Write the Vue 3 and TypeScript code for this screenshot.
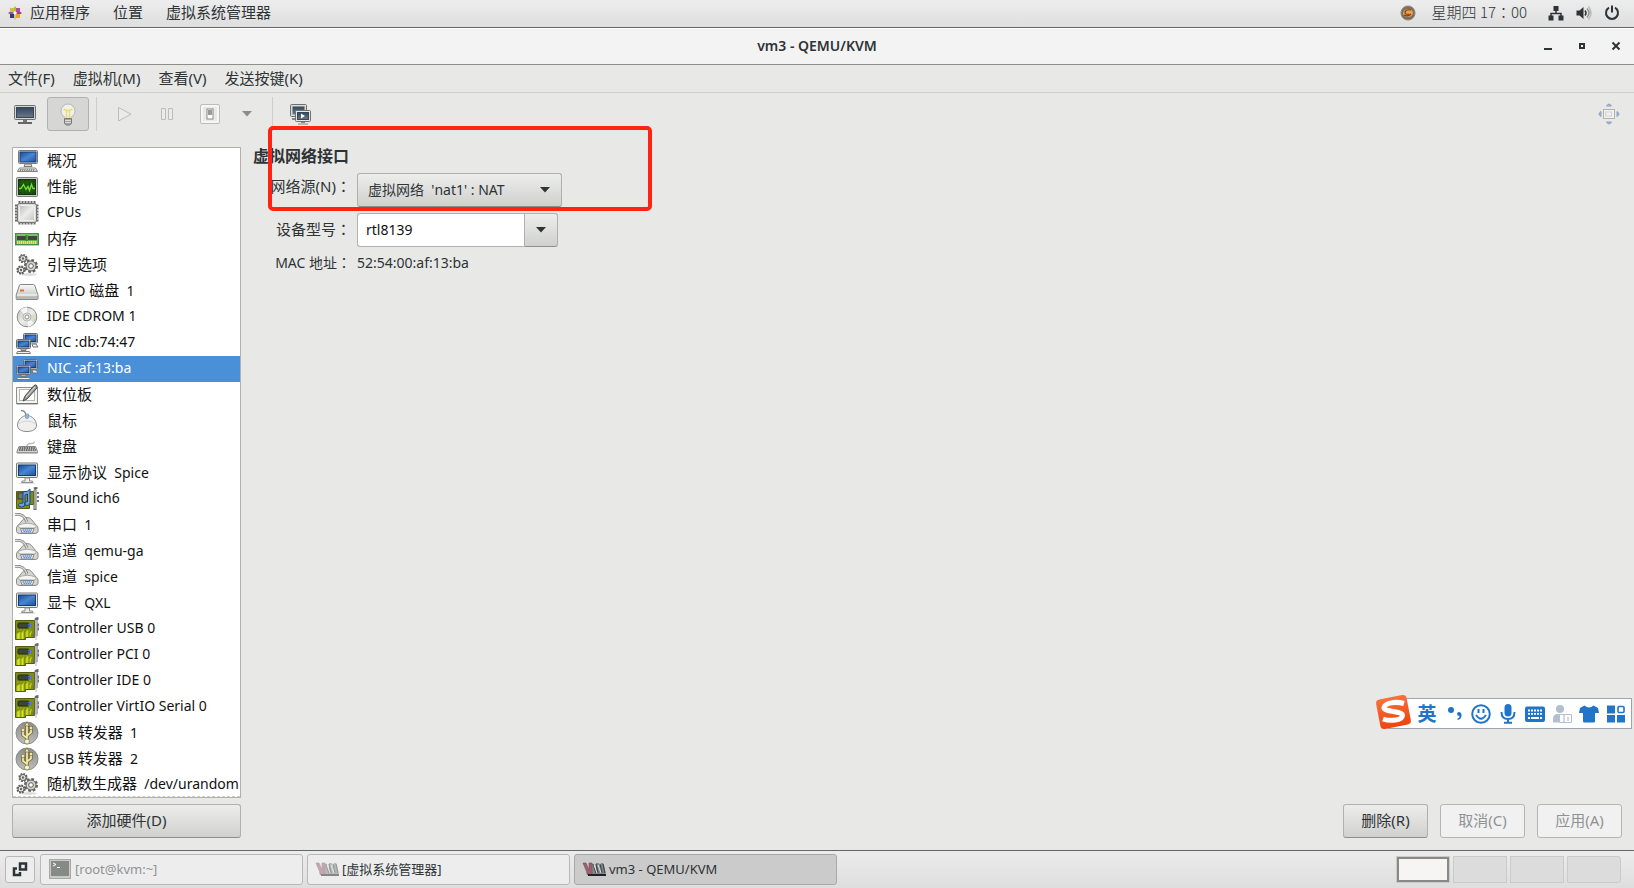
<script setup lang="ts">
import { ref } from 'vue'

interface Device {
  icon: string
  label: string
}

const devices: Device[] = [
  { icon: 'computer', label: '概况' },
  { icon: 'perf', label: '性能' },
  { icon: 'cpu', label: 'CPUs' },
  { icon: 'ram', label: '内存' },
  { icon: 'gears', label: '引导选项' },
  { icon: 'disk', label: 'VirtIO 磁盘  1' },
  { icon: 'cdrom', label: 'IDE CDROM 1' },
  { icon: 'nic', label: 'NIC :db:74:47' },
  { icon: 'nic', label: 'NIC :af:13:ba' },
  { icon: 'tablet', label: '数位板' },
  { icon: 'mouse', label: '鼠标' },
  { icon: 'keyboard', label: '键盘' },
  { icon: 'display', label: '显示协议  Spice' },
  { icon: 'sound', label: 'Sound ich6' },
  { icon: 'serial', label: '串口  1' },
  { icon: 'serial', label: '信道  qemu-ga' },
  { icon: 'serial', label: '信道  spice' },
  { icon: 'display', label: '显卡  QXL' },
  { icon: 'card', label: 'Controller USB 0' },
  { icon: 'card', label: 'Controller PCI 0' },
  { icon: 'card', label: 'Controller IDE 0' },
  { icon: 'card', label: 'Controller VirtIO Serial 0' },
  { icon: 'usb', label: 'USB 转发器  1' },
  { icon: 'usb', label: 'USB 转发器  2' },
  { icon: 'gears', label: '随机数生成器  /dev/urandom' },
]

// Splits a label so that Han runs can be set one size larger than Latin ones.
const runs = (text: string) => text.split(/([\u4e00-\u9fff]+)/).filter(Boolean)
const isHan = (text: string) => /[\u4e00-\u9fff]/.test(text)

const selected = ref(8)
const model = ref('rtl8139')
const menus = ['文件(F)', '虚拟机(M)', '查看(V)', '发送按键(K)']
</script>

<template>
  <div class="desktop">
    <svg class="defs" width="0" height="0" aria-hidden="true">
      <defs>
        <linearGradient id="scr" x1="0" y1="0" x2="1" y2="1">
          <stop offset="0" stop-color="#16499c" /><stop offset=".5" stop-color="#4a86cf" /><stop offset="1" stop-color="#1c4f9f" />
        </linearGradient>
        <linearGradient id="dark" x1="0" y1="0" x2="0" y2="1">
          <stop offset="0" stop-color="#33475f" /><stop offset="1" stop-color="#66788c" />
        </linearGradient>
        <linearGradient id="silver" x1="0" y1="0" x2="0" y2="1">
          <stop offset="0" stop-color="#fafafa" /><stop offset="1" stop-color="#b9bbb8" />
        </linearGradient>
        <linearGradient id="chip" x1="0" y1="0" x2="1" y2="1">
          <stop offset="0" stop-color="#bcbcba" /><stop offset=".5" stop-color="#ececea" /><stop offset="1" stop-color="#c4c4c2" />
        </linearGradient>
        <linearGradient id="usbg" x1="0" y1="0" x2="0" y2="1">
          <stop offset="0" stop-color="#8c8c8a" /><stop offset="1" stop-color="#bdbdbb" />
        </linearGradient>
        <linearGradient id="sogou" x1="0" y1="0" x2="0" y2="1">
          <stop offset="0" stop-color="#f9713a" /><stop offset="1" stop-color="#f0440f" />
        </linearGradient>
        <symbol id="i-computer" viewBox="0 0 24 24">
          <rect x="3.5" y="1.5" width="19" height="13" rx="1" fill="#e4e4e0" stroke="#777974" />
          <rect x="5" y="3" width="16" height="10" fill="url(#scr)" stroke="#163c77" />
          <path d="M10 15h6l1 2.500h-8z" fill="#ddd" stroke="#777974" />
          <path d="M4.500 19h16l2 3.500h-20z" fill="#f3f3f1" stroke="#80827e" />
          <path d="M5 20.500h15M4.500 21.500h16" stroke="#8a8c88" stroke-dasharray="1.500 .7" fill="none" />
        </symbol>
        <symbol id="i-perf" viewBox="0 0 24 24">
          <rect x="1.500" y="2.500" width="21" height="19" rx="1" fill="#c9cac7" stroke="#7b7d79" />
          <rect x="3.500" y="4.500" width="17" height="15" fill="#14500a" stroke="#1d2f17" />
          <path d="M4 8h16M4 12h16M4 16h16M8 5v14M12 5v14M16 5v14" stroke="#276c19" stroke-width=".6" />
          <path d="M4 13.500h2l2.500-4 2.500 5 2-3 1.500 4 2-6 1.500 4h2" fill="none" stroke="#7be234" stroke-width="1.300" />
        </symbol>
        <symbol id="i-cpu" viewBox="0 0 24 24">
          <path d="M3.500 1.500h18M3.500 22h18" stroke="#6c6d6a" stroke-width="3" stroke-dasharray="2 1" />
          <path d="M1.500 3.500v18M22 3.500v18" stroke="#6c6d6a" stroke-width="3" stroke-dasharray="2 1" />
          <rect x="2.500" y="2.500" width="19" height="19" rx="2" fill="#d9d9d7" stroke="#777875" />
          <rect x="4.500" y="4.500" width="15" height="15" rx="1" fill="url(#chip)" stroke="#f2f2f0" />
        </symbol>
        <symbol id="i-ram" viewBox="0 0 24 24">
          <rect x="0.500" y="6.500" width="23" height="11" fill="#67ad55" stroke="#4d8851" />
          <rect x="2" y="9" width="9" height="4" fill="#414641" /><rect x="13" y="9" width="9" height="4" fill="#414641" />
          <path d="M2 8h20" stroke="#9bcf8b" /><path d="M11.500 8v7" stroke="#1f9b22" stroke-width="2" />
          <path d="M2 15.500h20" stroke="#f5dd65" stroke-width="3" stroke-dasharray="1.500 .5" />
          <path d="M0 18.500h24" stroke="#c8c9b8" />
        </symbol>
        <symbol id="i-gears" viewBox="0 0 24 24">
          <ellipse cx="14" cy="21.500" rx="8" ry="1.500" fill="#ddd" />
          <g fill="#e8e8e5" stroke="#5f615d">
            <circle cx="8" cy="5.500" r="3.600" stroke-dasharray="1.800 1" stroke-width="2" /><circle cx="8" cy="5.500" r="3" />
            <circle cx="6" cy="17" r="3.600" stroke-dasharray="1.800 1" stroke-width="2" /><circle cx="6" cy="17" r="3" />
            <circle cx="16" cy="13" r="5.800" stroke-dasharray="2.600 1.900" stroke-width="2.500" /><circle cx="16" cy="13" r="5" fill="#d2d2cf" />
            <circle cx="16" cy="13" r="2.300" fill="#fff" />
          </g>
          <circle cx="8" cy="5.500" r="1.200" fill="#666" /><circle cx="6" cy="17" r="1.200" fill="#666" />
        </symbol>
        <symbol id="i-disk" viewBox="0 0 24 24">
          <path d="M5.500 5.500h13q1 0 1.500 1.500l3 9v3.500q0 1-1 1h-20q-.800 0-.800-1v-3.500l3-9q.300-1.500 1.300-1.500z" fill="url(#silver)" stroke="#858784" />
          <path d="M2 16h20.500" stroke="#fff" /><path d="M2 18.500h20" stroke="#b6b7b4" stroke-width="2" />
          <rect x="5" y="10.500" width="4" height="2" fill="#e8702a" />
        </symbol>
        <symbol id="i-cdrom" viewBox="0 0 24 24">
          <circle cx="12" cy="12" r="9.800" fill="url(#chip)" stroke="#888a87" />
          <path d="M12 12L5 5q3-3 7-3zM12 12l7 6q-2 3-6 4z" fill="#fff" opacity=".75" />
          <path d="M12 12l8-3q1 3 0 6z" fill="#d9dcb9" opacity=".7" />
          <circle cx="12" cy="12" r="4" fill="#e8e8e6" stroke="#b4b4b2" /><circle cx="12" cy="12" r="2" fill="#fff" stroke="#8c8e8b" />
        </symbol>
        <symbol id="i-nic" viewBox="0 0 24 24">
          <rect x="8.500" y="2.500" width="14" height="9.500" rx="1" fill="#eee" stroke="#6b6d69" />
          <rect x="10" y="4" width="11" height="6.500" fill="url(#scr)" stroke="#163c77" />
          <path d="M17 13h4l2 3h-5z" fill="#eee" stroke="#777" />
          <rect x="1.500" y="8.500" width="14" height="9" rx="1" fill="#eee" stroke="#6b6d69" />
          <rect x="3" y="10" width="11" height="6" fill="url(#scr)" stroke="#163c77" />
          <path d="M6 18h5v1.500H6zM2.500 20.500h12l1 2h-14z" fill="#f2f2ee" stroke="#777974" />
        </symbol>
        <symbol id="i-tablet" viewBox="0 0 24 24">
          <path d="M1.500 4.500h21v16.500h-21z" fill="#f5f5f4" stroke="#8d8f8b" />
          <rect x="4.500" y="6.500" width="15" height="11" fill="#fff" stroke="#b5b6b3" />
          <path d="M2 20.500h20.500" stroke="#777" />
          <path d="M8 18l2-5L19 2.500q2-1.500 3 .5v2L12 16z" fill="#999b98" stroke="#4c4e4b" />
          <path d="M11 14L20 4" stroke="#ddd" />
        </symbol>
        <symbol id="i-mouse" viewBox="0 0 24 24">
          <path d="M6 1.500q5 0 5 6" fill="none" stroke="#858785" stroke-width="1.300" />
          <path d="M12 6.500c5 0 9.500 5 9.500 9.500s-4 6.500-9.500 6.500-9.500-2-9.500-6.500S7 6.500 12 6.500z" fill="#efefed" stroke="#8b8d8a" />
          <path d="M3 15q9-6 18 0" fill="none" stroke="#d2d3d0" /><path d="M10.500 5h3v4q-1.500 1-3 0z" fill="#8fb9ea" stroke="#6b8cb5" stroke-width=".6" />
        </symbol>
        <symbol id="i-keyboard" viewBox="0 0 24 24">
          <path d="M19 6.500q1 2-3 2t-4 3" fill="none" stroke="#b9bab8" stroke-width="1.300" />
          <path d="M4 11.500h16.500l2 5v1.500h-20.500v-1.500z" fill="#d1d2cf" stroke="#858784" />
          <path d="M4.500 13h16M4 15h17" stroke="#4d4f4c" stroke-width="1.400" stroke-dasharray="1.600 .7" /><path d="M2 17.500h20.500" stroke="#999" />
        </symbol>
        <symbol id="i-display" viewBox="0 0 24 24">
          <rect x="1.500" y="2" width="21" height="14.500" rx="1" fill="#e9e9e4" stroke="#777974" />
          <rect x="3.500" y="4" width="17" height="10.500" fill="url(#scr)" stroke="#163c77" />
          <path d="M10 17h4.500v3h3l.5 1.500H6.500L7 20h3z" fill="#eee" stroke="#8d8f8b" /><path d="M4 22.500h16" stroke="#ddd" />
        </symbol>
        <symbol id="i-card" viewBox="0 0 24 24">
          <path d="M.5 3.500h19v17h-9v2H.5z" fill="#7f8d0e" stroke="#545e0b" />
          <path d="M2 13h12M15 7v11" stroke="#a5b41b" stroke-dasharray="2 1" />
          <rect x="3" y="6" width="11" height="5" rx="1" fill="#3d443e" stroke="#202a22" /><path d="M13 7.500h4M13 10h4" stroke="#4b79c4" stroke-width="1.600" />
          <path d="M2 22v-5l3-2v7M6.500 22v-6l2-2v8M11 20v-5l2-2v7M15 20v-4l2-2" fill="#d7e52c" stroke="#b3c218" />
          <path d="M18 19l3-1V2.500q0-1 2.500-1" fill="none" stroke="#686a67" stroke-width="3" />
          <path d="M21 23V3" stroke="#d0d1cf" stroke-width="1.500" /><path d="M22.500 8h1.500M22.500 12h1.500" stroke="#777" stroke-width="3" />
        </symbol>
        <symbol id="i-sound" viewBox="0 0 24 24">
          <path d="M1.500 4.500h17v13h-4v4h-13z" fill="#7f8d0e" stroke="#545e0b" />
          <rect x="3" y="6" width="6" height="6" fill="#6c766f" stroke="#353b35" />
          <path d="M19 2q2-1 3 0M20 3v20" stroke="#686a67" stroke-width="3" fill="none" /><path d="M20 3v19" stroke="#ddd" />
          <path d="M22 6h2M22 10h2M22 14h2" stroke="#777" stroke-width="2" />
          <path d="M8 16V5q5 0 7-3v14q0 2.500-3 2.500t-2.500-2.500q.5-1.500 3-1.500V7l-2.500 1v9q0 3-3.500 3t-3-2.500Q4 16 8 16z" fill="#6f9fdb" stroke="#1d4687" />
        </symbol>
        <symbol id="i-serial" viewBox="0 0 24 24">
          <path d="M1.500 15q0-2 2-3L8 6.500Q9.500 4.500 12 4.500q3 0 4.500 2L21 12q2 1 2 3v3.500q-.5 2-3 2H4.500q-2.500 0-3-2z" fill="#d5d6d3" stroke="#8a8c88" />
          <path d="M3 12.500Q12 8 21.500 12.500L20 15H4.500z" fill="#f4f4f2" stroke="#a9aba7" />
          <path d="M0 1.500q7-1 10 3.500l2 4" fill="none" stroke="#858784" stroke-width="3" />
          <path d="M0 1.500q7-1 10 3.500l2 4" fill="none" stroke="#dcddda" stroke-width="1.300" />
          <path d="M5.500 15.500h13.500l-1.500 4.500H7z" fill="#e8ecf2" stroke="#858784" /><path d="M7.500 17h10M8.500 18.700h8" stroke="#5e92db" stroke-width="1.300" stroke-dasharray="1.500 .5" />
        </symbol>
        <symbol id="i-usb" viewBox="0 0 24 24">
          <circle cx="12" cy="12" r="11" fill="url(#usbg)" stroke="#8c8e8a" />
          <path d="M12 3v17M12 17l-4-3V9M12 14.500l4-3V7" fill="none" stroke="#6c6743" stroke-width="3.400" />
          <path d="M12 3v17M12 17l-4-3V9M12 14.500l4-3V7" fill="none" stroke="#f4e8a2" stroke-width="1.800" />
          <path d="M12 1l2.500 4h-5z" fill="#f4e8a2" stroke="#6c6743" stroke-width=".7" /><circle cx="12" cy="20.500" r="2.500" fill="#f9f2c8" stroke="#7e794f" stroke-width=".7" />
          <circle cx="8" cy="9" r="1.800" fill="#f4e8a2" stroke="#6c6743" stroke-width=".6" /><rect x="14.500" y="5.500" width="3.200" height="3.200" fill="#f4e8a2" stroke="#6c6743" stroke-width=".6" />
        </symbol>
        <symbol id="i-vmm" viewBox="0 0 24 16">
          <path d="M5 14L4 11.500h4L7 2h3l4 9V2h3l2 9V2h2l3 12z" fill="#83888a" />
          <path d="M1 2h3l3 7V2h3v12H6z" fill="#a06070" stroke="#6b5059" stroke-width=".6" />
          <path d="M11 3l3 9M14 3l2 9M18 3l2 9M21 3l2 9" stroke="#3f4749" stroke-width="1.200" /><path d="M6 14h18" stroke="#222" stroke-width="2" />
          <path d="M12 4l3 8M16 4l3 8" stroke="#dde2e3" />
        </symbol>
      </defs>
    </svg>

    <header class="panel">
      <nav class="panel-left">
        <svg width="14" height="14" viewBox="0 0 14 14" aria-hidden="true">
          <path d="M7 0l2 3-2 3-2-3z" fill="#9acb2d" /><path d="M14 7l-3 2-3-2 3-2z" fill="#a33c8c" /><path d="M7 14l-2-3 2-3 2 3z" fill="#c5d35b" /><path d="M0 7l3-2 3 2-3 2z" fill="#8b5aa8" />
          <path d="M2 2h4v4H2z" fill="#d9b74a" /><path d="M8 2h4v4H8z" fill="#b44aa0" /><path d="M8 8h4v4H8z" fill="#efa52c" /><path d="M2 8h4v4H2z" fill="#3c3485" /><path d="M6 6h2v2H6z" fill="#fff" />
        </svg>
        <button type="button" class="plain apps">应用程序</button>
        <button type="button" class="plain">位置</button>
        <button type="button" class="plain">虚拟系统管理器</button>
      </nav>
      <div class="panel-right">
        <svg width="16" height="16" viewBox="0 0 16 16" aria-hidden="true">
          <circle cx="8" cy="8" r="7" fill="#7d6e60" stroke="#88827b" /><path d="M3 9q0-5 6-5 4 1 4 4-1 4-5 4-4 0-5-3z" fill="#f0a04b" />
          <path d="M11 5q-5-1-6 2 0 3 4 2M4 10q4 2 7-1" fill="none" stroke="#7d4412" stroke-width="1.200" />
        </svg>
        <button type="button" class="plain clock">星期四 17：00</button>
        <svg width="16" height="16" viewBox="0 0 16 16" aria-label="网络">
          <path d="M8 4v5M3 11V8.500h10V11" fill="none" stroke="#2e3436" stroke-width="1.500" /><path d="M5.500 1h5v5h-5zM.5 10.500h5v5h-5zM10.500 10.500h5v5h-5z" fill="#2e3436" />
        </svg>
        <svg width="16" height="16" viewBox="0 0 16 16" aria-label="音量">
          <path d="M.5 5.500h3L7.500 2v12l-4-3.500h-3z" fill="#2e3436" /><path d="M9 5.500q2 2.500 0 5" fill="none" stroke="#2e3436" stroke-width="1.500" />
          <path d="M11 3.500q4 4.500 0 9" fill="none" stroke="#8f9394" stroke-width="1.500" /><path d="M12.500 1.500q5 6.500 0 13" fill="none" stroke="#b9bbbb" stroke-width="1.500" />
        </svg>
        <svg width="16" height="16" viewBox="0 0 16 16" aria-label="电源">
          <path d="M5 2.700a6 6 0 1 0 6 0" fill="none" stroke="#2e3436" stroke-width="2" /><path d="M8 .5v7" stroke="#2e3436" stroke-width="2" />
        </svg>
      </div>
    </header>

    <div class="titlebar">
      <span></span>
      <h1>vm3 - QEMU/KVM</h1>
      <div class="wm">
        <button type="button" class="plain" aria-label="最小化"><svg width="10" height="10"><path d="M1 8h8" stroke="#2e3436" stroke-width="2" /></svg></button>
        <button type="button" class="plain" aria-label="最大化"><svg width="10" height="10"><path d="M3 3h4v4H3z" fill="none" stroke="#2e3436" stroke-width="2" /></svg></button>
        <button type="button" class="plain" aria-label="关闭"><svg width="10" height="10"><path d="M1.500 1.500l7 7M8.500 1.500l-7 7" stroke="#2e3436" stroke-width="2" /></svg></button>
      </div>
    </div>

    <nav class="menubar">
      <button v-for="m in menus" :key="m" type="button" class="plain">{{ m }}</button>
    </nav>

    <div class="toolbar">
      <button type="button" class="plain tool" aria-label="控制台">
        <svg width="24" height="24" viewBox="0 0 24 24">
          <rect x="1.500" y="3.500" width="21" height="14" rx="1" fill="#d5d6d3" stroke="#6f716d" /><rect x="3.500" y="5.500" width="17" height="10" fill="url(#dark)" stroke="#3a4554" />
          <path d="M10 18h4v2.500h-4z" fill="#777" /><path d="M5 21h14" stroke="#666" stroke-width="2" />
        </svg>
      </button>
      <button type="button" class="tool active" aria-label="详情">
        <svg width="24" height="24" viewBox="0 0 24 24">
          <circle cx="12" cy="9" r="7" fill="#f1f1e9" stroke="#b6b7b0" /><path d="M9 13h6v5H9z" fill="#eeeede" />
          <path d="M7.500 7l3 1.500h3l3-1.500M10.500 8v8M13.500 8v8" fill="none" stroke="#e9dc76" stroke-width="1.400" />
          <path d="M8.500 16.500h7v5l-2 1.500h-3l-2-1.500z" fill="#a2a49f" stroke="#777974" /><path d="M9 18.500h6M9 20.500h6" stroke="#dcdcda" />
        </svg>
      </button>
      <i class="sep"></i>
      <button type="button" class="plain tool" disabled aria-label="运行">
        <svg width="24" height="24" viewBox="0 0 24 24"><path d="M6.500 5.500v13.500L19 12.200z" fill="#ebebea" stroke="#bcbdbb" /></svg>
      </button>
      <button type="button" class="plain tool" disabled aria-label="暂停">
        <svg width="24" height="24" viewBox="0 0 24 24"><path d="M6.500 6.500h4v11h-4zM13.500 6.500h4v11h-4z" fill="#ebebea" stroke="#bcbdbb" /></svg>
      </button>
      <button type="button" class="plain tool" aria-label="关机">
        <svg width="24" height="24" viewBox="0 0 24 24"><rect x="2.500" y="2.500" width="19" height="19" rx="1.500" fill="#f6f6f5" stroke="#bdbebb" /><rect x="5" y="5" width="14" height="14" fill="#e9e9e7" /><rect x="9" y="7" width="6" height="10" fill="#fff" stroke="#888a87" /><path d="M10 8h4v5h-4z" fill="#999b98" /></svg>
      </button>
      <button type="button" class="plain arrow" aria-label="关机选项"><svg width="10" height="6"><path d="M0 0h10L5 5.500z" fill="#8b8d8a" /></svg></button>
      <i class="sep"></i>
      <button type="button" class="plain tool" aria-label="快照">
        <svg width="24" height="24" viewBox="0 0 24 24">
          <rect x="2.500" y="2.500" width="16" height="12" rx="1" fill="#d9dad7" stroke="#6f716d" /><rect x="4.500" y="4.500" width="12" height="8" fill="url(#dark)" />
          <path d="M4 17h5" stroke="#888" stroke-width="2" />
          <rect x="7.500" y="8.500" width="15" height="11" rx="1" fill="#e6e6e4" stroke="#6f716d" /><rect x="9.500" y="10.500" width="11" height="7" fill="url(#dark)" stroke="#3a4554" />
          <path d="M13 11.500v5l4-2.500z" fill="#fff" /><path d="M10 22h10M13 20.500h4" stroke="#888" />
        </svg>
      </button>
      <button type="button" class="plain tool full" aria-label="全屏">
        <svg width="24" height="24" viewBox="0 0 24 24">
          <g fill="#a9b9d4" stroke="#8ea2c4"><path d="M9.500 4q2.500-4 5 0zM9.500 20q2.500 4 5 0zM4 9.500q-4 2.500 0 5zM20 9.500q4 2.500 0 5z" /></g>
          <rect x="6.500" y="7.500" width="11" height="9" fill="#f1f1f0" stroke="#b0b2ae" /><rect x="8.500" y="10" width="6" height="4" fill="none" stroke="#d3d4d2" />
        </svg>
      </button>
    </div>

    <main class="content">
      <aside class="side">
        <ul class="devices">
          <li v-for="(d, i) in devices" :key="i">
            <button type="button" class="plain device" :class="{ on: selected === i }" @click="selected = i">
              <svg width="24" height="24" aria-hidden="true"><use :href="'#i-' + d.icon" /></svg>
              <span class="name"><span v-for="(r, k) in runs(d.label)" :key="k" :class="{ han: isHan(r) }">{{ r }}</span></span>
            </button>
          </li>
        </ul>
        <button type="button" class="btn">添加硬件(D)</button>
      </aside>

      <section class="detail">
        <h2>虚拟网络接口</h2>
        <form class="form" @submit.prevent>
          <label for="source" class="high">网络源(N)：</label>
          <div class="select">
            <select id="source">
              <option>虚拟网络&nbsp; 'nat1' : NAT</option>
            </select>
            <svg width="10" height="6" aria-hidden="true"><path d="M0 0h10L5 5.500z" fill="#2e3436" /></svg>
          </div>
          <label for="model">设备型号：</label>
          <div class="combo">
            <input id="model" v-model="model" type="text" />
            <button type="button" aria-label="选择设备型号"><svg width="10" height="6"><path d="M0 0h10L5 5.500z" fill="#2e3436" /></svg></button>
          </div>
          <span class="label">MAC 地址：</span>
          <span class="mac">52:54:00:af:13:ba</span>
        </form>
        <div class="mark"></div>
        <div class="actions">
          <button type="button" class="btn">删除(R)</button>
          <button type="button" class="btn" disabled>取消(C)</button>
          <button type="button" class="btn" disabled>应用(A)</button>
        </div>
      </section>
    </main>

    <footer class="taskbar">
      <button type="button" class="task show" aria-label="显示桌面">
        <svg width="16" height="16" viewBox="0 0 16 16"><path d="M8 2.500h6v6H8z" fill="none" stroke="#2e3436" stroke-width="2.500" /><path d="M5 7.500H2V14h6v-3" fill="none" stroke="#2e3436" stroke-width="2.500" /></svg>
      </button>
      <button type="button" class="task dim">
        <svg width="24" height="24" viewBox="0 0 24 24"><rect x="1.500" y="2.500" width="21" height="19" fill="#c9cac8" stroke="#a9aaa8" /><rect x="3" y="4" width="18" height="15" fill="#858a87" /><path d="M5 6l3 1.500L5 9M9 10.500h3" fill="none" stroke="#fff" /></svg>
        <span>[root@kvm:~]</span>
      </button>
      <button type="button" class="task"><svg class="faded" width="24" height="16"><use href="#i-vmm" /></svg><span>[虚拟系统管理器]</span></button>
      <button type="button" class="task current"><svg width="24" height="16"><use href="#i-vmm" /></svg><span>vm3 - QEMU/KVM</span></button>
      <div class="spaces">
        <button type="button" class="space here" aria-label="工作区 1"></button>
        <button v-for="n in 3" :key="n" type="button" class="space" :aria-label="'工作区 ' + (n + 1)"></button>
      </div>
    </footer>

    <div class="ime">
      <svg class="logo" width="38" height="36" viewBox="0 0 38 36" aria-hidden="true">
        <rect x="3" y="3" width="31" height="30" rx="4" fill="url(#sogou)" transform="rotate(-11 18.500 18)" />
        <path d="M29 9.500C20 7 10 9 9 13.500c-.5 5 19 3 18.500 8C27 26.500 15 27.500 8 25" fill="none" stroke="#fff" stroke-width="5" />
      </svg>
      <button type="button" class="plain lang">英</button>
      <button type="button" class="plain" aria-label="标点"><svg width="20" height="20" viewBox="0 0 20 20"><circle cx="7" cy="6" r="3" fill="#2175c9" /><path d="M14.500 8q3.500 0 3 4-.5 3.500-4 4v-1.500q2-.5 2-2.500-2.500 0-2.500-2 0-1.500 1.500-2z" fill="#2175c9" /></svg></button>
      <button type="button" class="plain" aria-label="表情"><svg width="20" height="20" viewBox="0 0 20 20"><circle cx="10" cy="10" r="8.800" fill="none" stroke="#2175c9" stroke-width="2" /><path d="M5 11q5 7.500 10 0" fill="none" stroke="#2175c9" stroke-width="1.800" /><path d="M7.500 5v4M12.500 5v4" stroke="#2175c9" stroke-width="2" /></svg></button>
      <button type="button" class="plain" aria-label="语音"><svg width="20" height="20" viewBox="0 0 20 20"><rect x="6.500" y="0" width="7" height="12.500" rx="3.500" fill="#2175c9" /><path d="M3.500 8q0 7 6.500 7t6.500-7M10 15v3M6 18.800h8" fill="none" stroke="#2175c9" stroke-width="2" /></svg></button>
      <button type="button" class="plain" aria-label="软键盘"><svg width="20" height="20" viewBox="0 0 20 20"><rect x="0" y="2.500" width="20" height="15.500" rx="2" fill="#2175c9" /><path d="M3 6.500h14M3 9.800h14" stroke="#fff" stroke-width="1.800" stroke-dasharray="2 1" /><path d="M3 14h14" stroke="#fff" stroke-width="1.800" stroke-dasharray="2 1 8 1" /></svg></button>
      <button type="button" class="plain" aria-label="账户"><svg width="20" height="20" viewBox="0 0 20 20"><circle cx="8" cy="5" r="4" fill="#b3bed2" /><path d="M1 18.500v-4Q1 10 6 10h3q4 0 5 2v6.500z" fill="#b3bed2" /><path d="M7.500 10.500h12v8h-12z" fill="#fff" stroke="#b3bed2" /><path d="M12 11v7M16 13v4" stroke="#b3bed2" stroke-width="1.200" /></svg></button>
      <button type="button" class="plain" aria-label="皮肤"><svg width="20" height="20" viewBox="0 0 20 20"><path d="M5.500 1.500q4.500 4 9 0L19 4l1 5h-4v8.500q0 1-1 1H5q-1 0-1-1V9H0l1-5z" fill="#2175c9" /></svg></button>
      <button type="button" class="plain" aria-label="工具箱"><svg width="20" height="20" viewBox="0 0 20 20"><path d="M1 1.500h8v8H1zM1 11h8v7.500H1zM11 11h8v7.500h-8z" fill="#2175c9" /><rect x="12" y="2.500" width="6" height="6" rx="1" fill="#fff" stroke="#2175c9" stroke-width="1.600" /></svg></button>
    </div>
  </div>
</template>

<style>
html,
body {
  margin: 0;
  background: #e8e8e6;
}
</style>

<style scoped>
.desktop {
  position: relative;
  display: flex;
  flex-direction: column;
  min-height: 100vh;
  background: #e8e8e6;
  color: #2e3436;
  font: 14px/20px "Noto Sans", "Noto Sans CJK SC", sans-serif;
}
.desktop *,
.desktop {
  box-sizing: border-box;
}
.defs {
  position: absolute;
}
svg {
  display: block;
  flex: none;
}
button,
select,
input {
  margin: 0;
  font: inherit;
  color: inherit;
}
.plain {
  padding: 0;
  border: 0;
  background: none;
  white-space: pre;
}
.panel {
  display: flex;
  justify-content: space-between;
  height: 28px;
  padding: 0 14px 2px 8px;
  background: linear-gradient(#ededed, #dedede);
  border-bottom: 1px solid #65666a;
  font-size: 15px;
}
.panel .plain,
.menubar .plain {
  padding-bottom: 2px;
}
.panel-left,
.panel-right {
  display: flex;
  align-items: center;
}
.panel-left {
  gap: 23px;
}
.apps {
  margin-left: -15px;
}
.panel-right {
  gap: 12px;
}
.clock {
  margin: 0 9px 0 4px;
  font-family: "Noto Sans CJK TC", sans-serif;
  font-weight: 300;
}
.titlebar {
  display: grid;
  grid-template-columns: 1fr auto 1fr;
  align-items: center;
  height: 37px;
  padding: 0 13px 2px;
  background: #f3f3f3;
  border-top: 1px solid #fff;
  border-bottom: 1px solid #8d8e88;
}
h1 {
  margin: 0;
  font-size: 14px;
  font-weight: 600;
}
.wm {
  display: flex;
  justify-content: flex-end;
  gap: 24px;
}
.menubar {
  display: flex;
  align-items: center;
  gap: 18px;
  height: 28px;
  padding: 0 8px;
  border-bottom: 1px solid #cfcfcd;
  font-size: 15px;
}
.toolbar {
  display: flex;
  align-items: center;
  height: 42px;
  padding: 0 4px;
}
.tool {
  display: grid;
  place-items: center;
  width: 42px;
  height: 34px;
}
.active {
  margin: 0 7px 0 1px;
  padding: 0;
  border: 1px solid #b0b0ae;
  border-radius: 3px;
  background: #d6d6d4;
}
.sep {
  width: 1px;
  height: 34px;
  margin-right: 6px;
  background: #cfcfcd;
}
.tool:disabled {
  margin-right: 1px;
}
.arrow {
  display: grid;
  place-items: center;
  width: 32px;
  height: 34px;
  margin-right: 9px;
}
.full {
  margin-left: auto;
}
.content {
  display: flex;
  flex: 1;
  gap: 12px;
  padding: 12px;
}
.side {
  display: flex;
  flex-direction: column;
  width: 229px;
}
.devices {
  flex: 1;
  margin: 0 0 6px;
  padding: 0;
  border: 1px solid #b0b0ae;
  background: #fff;
  list-style: none;
  color: #111;
}
.devices li:last-child {
  height: 25px;
  border-bottom: 1px dashed #ccc;
}
.devices li:last-child .device {
  height: 24px;
}
.device {
  display: flex;
  align-items: center;
  gap: 8px;
  width: 100%;
  height: 26px;
  padding: 0 2px;
  text-align: left;
}
.name {
  padding-bottom: 2px;
}
.han {
  font-size: 15px;
}
.on {
  background: #4a90d9;
  color: #fff;
}
.btn {
  height: 34px;
  padding: 0 16px 3px;
  border: 1px solid #b0b0ae;
  border-bottom-color: #8e8e8c;
  border-radius: 3px;
  background: linear-gradient(#ededec, #d0d0ce);
  font-size: 15px;
}
.btn:disabled {
  border-color: #b5b5b3;
  background: #f1f1f1;
  color: #8f9394;
}
.detail {
  position: relative;
  display: flex;
  flex: 1;
  flex-direction: column;
}
h2 {
  margin: 0;
  font-size: 16px;
  line-height: 18px;
  font-weight: 700;
}
.form {
  display: grid;
  grid-template-columns: 98px auto;
  justify-content: start;
  align-items: center;
  gap: 6px;
  margin-top: 8px;
}
.form label,
.label {
  font-family: "Noto Sans", "Noto Sans CJK TC", sans-serif;
  text-align: right;
  white-space: nowrap;
}
.form label {
  padding-bottom: 2px;
  font-size: 15px;
}
.form .high {
  align-self: start;
  margin-top: 3px;
}
.select {
  position: relative;
  width: 205px;
}
.select select {
  display: block;
  appearance: none;
  width: 100%;
  height: 34px;
  padding: 0 10px;
  border: 1px solid #b0b0ae;
  border-bottom-color: #8e8e8c;
  border-radius: 3px;
  background: linear-gradient(#ededec, #d0d0ce);
}
.select svg {
  position: absolute;
  top: 14px;
  right: 12px;
  pointer-events: none;
}
.combo {
  display: flex;
  width: 201px;
  height: 34px;
}
.combo input {
  flex: 1;
  min-width: 0;
  padding: 0 8px;
  border: 1px solid #b0b0ae;
  border-right: 0;
  border-radius: 3px 0 0 3px;
  background: #fff;
  color: #111;
}
.combo button {
  display: grid;
  place-items: center;
  width: 34px;
  padding: 0;
  border: 1px solid #b0b0ae;
  border-bottom-color: #8e8e8c;
  border-radius: 0 3px 3px 0;
  background: linear-gradient(#ededec, #d0d0ce);
}
.mark {
  position: absolute;
  top: -21px;
  left: 15px;
  width: 384px;
  height: 85px;
  border: 4px solid #ff2314;
  border-radius: 5px;
  pointer-events: none;
}
.actions {
  display: flex;
  justify-content: flex-end;
  gap: 12px;
  margin-top: auto;
}
.actions .btn {
  width: 85px;
  padding: 0 0 3px;
}
.taskbar {
  display: flex;
  align-items: center;
  gap: 4px;
  height: 38px;
  padding: 0 13px 1px 5px;
  border-top: 1px solid #65666a;
  background: linear-gradient(#ececec, #dedede);
  font-size: 13px;
}
.task {
  display: flex;
  align-items: center;
  gap: 3px;
  width: 263px;
  height: 31px;
  padding: 0 7px;
  border: 1px solid #b8b8b8;
  border-radius: 3px;
  background: #ededed;
}
.task span {
  padding-bottom: 1px;
}
.show {
  justify-content: center;
  width: 30px;
  height: 27px;
  margin-right: 1px;
}
.dim {
  color: #8f9394;
}
.faded {
  opacity: .5;
}
.current {
  border-color: #a9a9a9;
  background: #cbcbcb;
}
.spaces {
  display: flex;
  gap: 3px;
  margin-left: auto;
}
.space {
  width: 54px;
  height: 27px;
  padding: 0;
  border: 1px solid #cacaca;
  background: #dcdcdc;
}
.space:last-child {
  border-radius: 0 3px 3px 0;
}
.here {
  background: #f6f5f4;
  box-shadow: inset 0 0 0 2px #888a88;
}
.ime {
  position: absolute;
  right: 2px;
  bottom: 159px;
  display: flex;
  align-items: center;
  gap: 7px;
  height: 31px;
  padding: 0 5px 0 28px;
  border: 1px solid #9fa3ad;
  background: #fff;
}
.logo {
  position: absolute;
  top: -5px;
  left: -14px;
}
.lang {
  width: 20px;
  font-size: 19px;
  font-weight: 700;
  color: #2175c9;
}
</style>
